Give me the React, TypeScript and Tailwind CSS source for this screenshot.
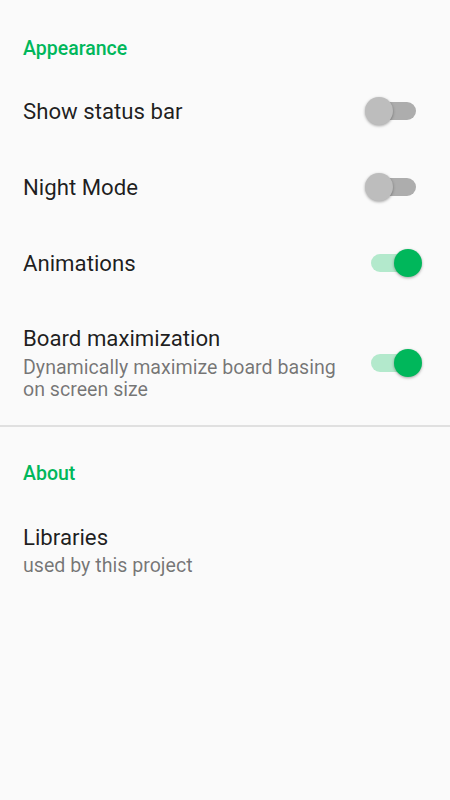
import React from "react";

function Switch({ on }: { on: boolean }) {
  return (
    <div className="relative w-[57px] h-[28px] shrink-0">
      <div
        className={
          "absolute left-[6px] top-[5px] w-[45px] h-[18px] rounded-full " +
          (on ? "bg-[#b3e9cc]" : "bg-[#adadad]")
        }
      />
      <div
        className={
          "absolute top-0 w-[28px] h-[28px] rounded-full shadow-[0_1px_3px_rgba(0,0,0,0.35)] " +
          (on ? "left-[29px] bg-[#00b75b]" : "left-0 bg-[#bdbdbd]")
        }
      />
    </div>
  );
}

export default function App() {
  const font = { fontFamily: "Roboto, 'Noto Sans', sans-serif" };
  return (
    <div className="w-[450px] h-[800px] bg-[#fafafa]" style={font}>
      <div className="pl-[23px] pt-[37px] pb-[12px] text-[19.5px] leading-[24px] font-medium text-[#00b75b]">
        Appearance
      </div>
      {["Show status bar", "Night Mode", "Animations"].map((t, i) => (
        <div key={t} className="h-[76px] flex items-center pl-[23px] pr-[28px]">
          <div className="flex-1 text-[22.2px] leading-[26px] text-[#000000e0]">{t}</div>
          <Switch on={i === 2} />
        </div>
      ))}
      <div className="flex items-center pl-[23px] pr-[28px] pt-[24px] pb-[24px]">
        <div className="flex-1 pr-[20px]">
          <div className="text-[22.2px] leading-[26px] text-[#000000e0]">Board maximization</div>
          <div className="mt-[6px] max-w-[325px] text-[19.6px] leading-[22px] text-[#0000008a]">
            Dynamically maximize board basing on screen size
          </div>
        </div>
        <Switch on={true} />
      </div>
      <div className="h-[2px] bg-[#e0e0e0]" />
      <div className="pl-[23px] pt-[35px] text-[19.5px] leading-[24px] font-medium text-[#00b75b]">
        About
      </div>
      <div className="pl-[23px] pt-[38px]">
        <div className="text-[22.2px] leading-[26px] text-[#000000e0]">Libraries</div>
        <div className="mt-[5px] text-[19.6px] leading-[22px] text-[#0000008a]">used by this project</div>
      </div>
    </div>
  );
}
